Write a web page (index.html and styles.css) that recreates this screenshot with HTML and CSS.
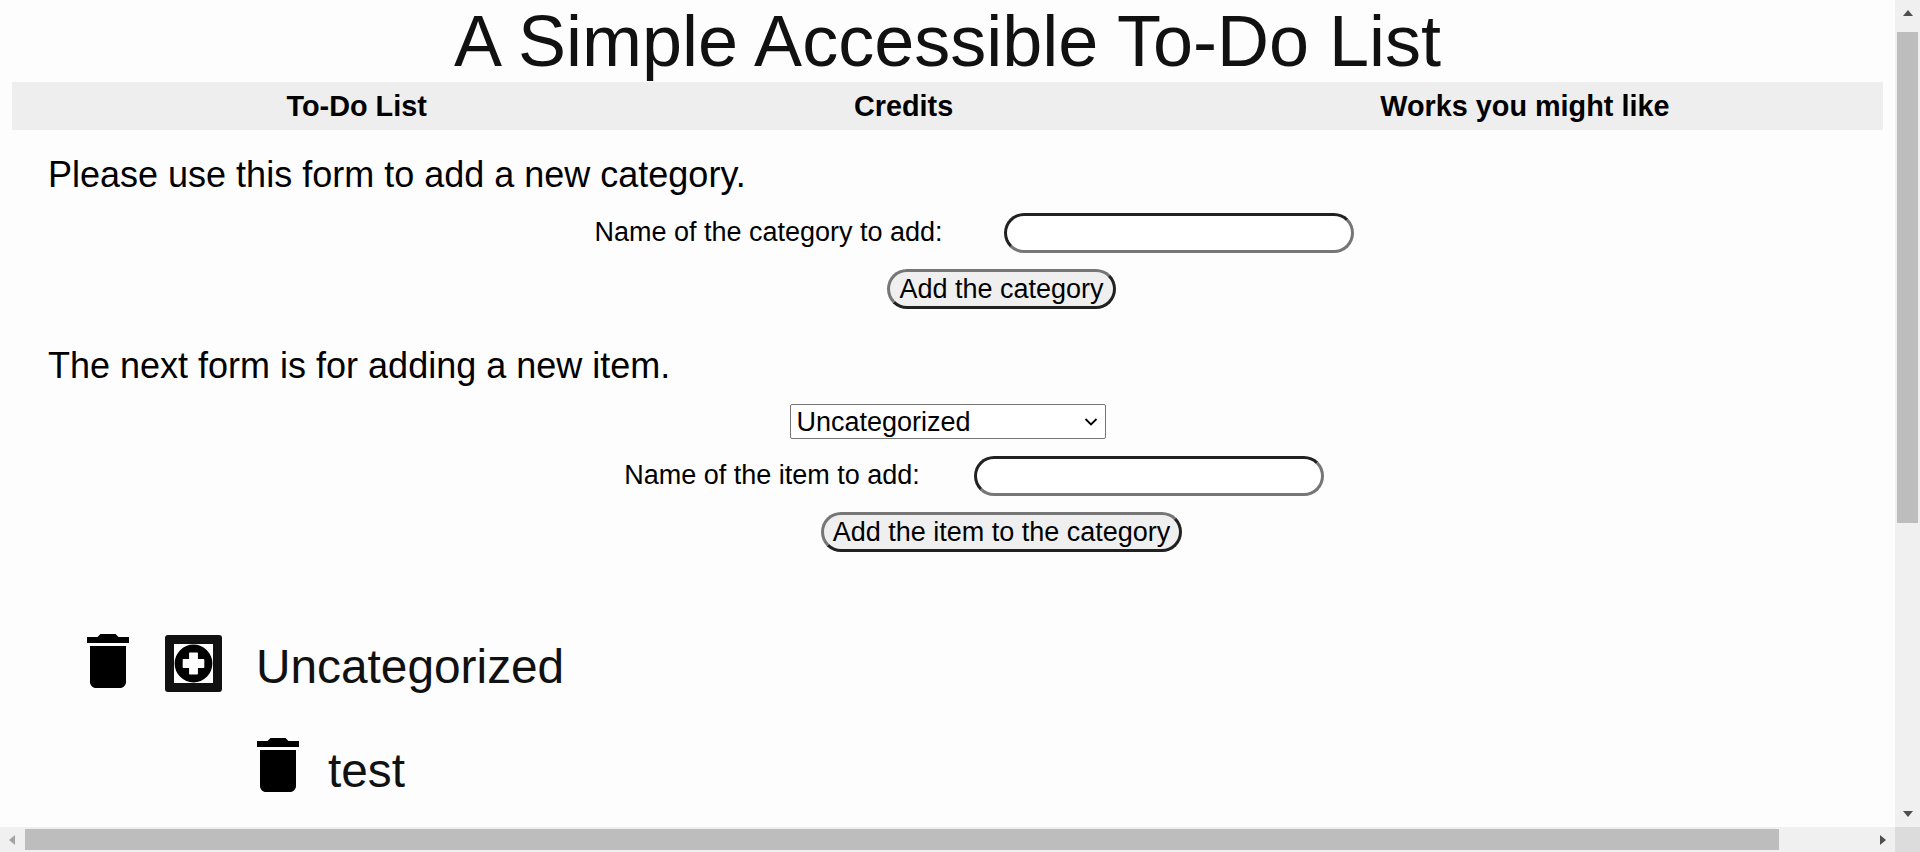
FILE: index.html
```html
<!DOCTYPE html>
<html lang="en">
<head>
  <meta charset="UTF-8">
  <title>A Simple Accessible To-Do List</title>
  <link rel="stylesheet" href="styles.css">
</head>
<body>
<div class="window">
  <main class="page">
    <h1>A Simple Accessible To-Do List</h1>
    <nav class="tabs">
      <a href="#list">To-Do List</a>
      <a href="#credits">Credits</a>
      <a href="#works">Works you might like</a>
    </nav>

    <p class="intro first">Please use this form to add a new category.</p>
    <form class="add-form">
      <div class="field">
        <label for="category">Name of the category to add:</label>
        <input type="text" id="category">
      </div>
      <button type="button" class="pill">Add the category</button>
    </form>

    <p class="intro">The next form is for adding a new item.</p>
    <form class="add-form second">
      <select id="categoryPick">
        <option>Uncategorized</option>
      </select>
      <div class="field">
        <label for="item">Name of the item to add:</label>
        <input type="text" id="item">
      </div>
      <button type="button" class="pill">Add the item to the category</button>
    </form>

    <section class="todo">
      <div class="category">
        <svg class="trash" viewBox="0 0 24 24"><path d="M6 19c0 1.1.9 2 2 2h8c1.1 0 2-.9 2-2V7H6v12zM19 4h-3.5l-1-1h-5l-1 1H5v2h14V4z"/></svg>
        <button type="button" class="add-item" aria-label="Add item">
          <svg viewBox="0 0 512 512"><path fill-rule="evenodd" d="M256 8a248 248 0 1 0 0 496a248 248 0 1 0 0-496z M208 112h96q10 0 10 10v74h74q10 0 10 10v100q0 10-10 10h-74v74q0 10-10 10h-96q-10 0-10-10v-74h-74q-10 0-10-10v-100q0-10 10-10h74v-74q0-10 10-10z"/></svg>
        </button>
        <span class="name">Uncategorized</span>
      </div>
      <div class="item">
        <svg class="trash" viewBox="0 0 24 24"><path d="M6 19c0 1.1.9 2 2 2h8c1.1 0 2-.9 2-2V7H6v12zM19 4h-3.5l-1-1h-5l-1 1H5v2h14V4z"/></svg>
        <span class="name">test</span>
      </div>
    </section>
  </main>

  <div class="vbar">
    <span class="arrow up"></span>
    <div class="vtrack"><div class="vthumb"></div></div>
    <span class="arrow down"></span>
  </div>
  <div class="hbar">
    <span class="arrow left"></span>
    <div class="htrack"><div class="hthumb"></div></div>
    <span class="arrow right"></span>
  </div>
  <div class="corner"></div>
</div>
</body>
</html>
```

FILE: styles.css
```css
html, body {
  margin: 0;
  padding: 0;
  height: 100%;
  overflow: hidden;
}
body {
  font-family: "Liberation Sans", Arial, sans-serif;
  font-size: 27px;
  color: #000;
  background-color: #fdfdfd;
}
.window {
  display: grid;
  grid-template-columns: 1fr 25px;
  grid-template-rows: 1fr 25px;
  height: 100%;
}
.page {
  padding: 0 12px;
  overflow: hidden;
  min-width: 0;
}
h1 {
  margin: 0;
  font-size: 72px;
  font-weight: normal;
  line-height: 82px;
  text-align: center;
  color: #111;
}
.tabs {
  display: flex;
  justify-content: space-around;
  align-items: center;
  height: 48px;
  padding-left: 61px;
  background-color: #eee;
}
.tabs a {
  font-size: 28.8px;
  font-weight: bold;
  color: #000;
  text-decoration: none;
}
.intro {
  margin: 0 0 0 36px;
  font-size: 36px;
  line-height: 39px;
  padding-top: 37px;
}
.intro.first {
  padding-top: 25px;
  padding-bottom: 1px;
}
.add-form {
  display: flex;
  flex-direction: column;
  align-items: center;
  padding-top: 18px;
  gap: 16px;
}
.add-form.second {
  padding-top: 19px;
}
.field {
  display: flex;
  align-items: center;
  margin-left: 53px;
}
.field label {
  margin-right: 61px;
  padding-bottom: 1px;
}
.second .field {
  margin-top: 1px;
}
.second .field label {
  margin-right: 54px;
}
input {
  width: 350px;
  height: 40px;
  box-sizing: border-box;
  border: 3px inset #767676;
  border-radius: 20px;
  background-color: #fff;
}
select {
  appearance: none;
  width: 316px;
  height: 35px;
  box-sizing: border-box;
  padding: 0 6px;
  font-family: inherit;
  font-size: 27px;
  color: #000;
  border: 1px solid #767676;
  border-radius: 2px;
  background: #fff url("data:image/svg+xml,%3Csvg xmlns='http://www.w3.org/2000/svg' width='14' height='8' viewBox='0 0 14 8'%3E%3Cpath d='M1.5 1l5.5 5.5L12.5 1' fill='none' stroke='%23000' stroke-width='1.8'/%3E%3C/svg%3E") no-repeat right 7px center;
}
.pill {
  height: 40px;
  margin-left: 108px;
  padding: 0 9px;
  box-sizing: border-box;
  font-family: inherit;
  font-size: 27px;
  color: #000;
  background-color: #efefef;
  border: 3px outset #767676;
  border-radius: 20px;
}
.todo {
  padding-top: 73px;
}
.category, .item {
  display: flex;
  align-items: center;
  height: 72px;
}
.category {
  margin-left: 60px;
}
.item {
  margin-top: 32px;
  margin-left: 230px;
}
.trash {
  width: 72px;
  height: 72px;
  flex: none;
}
.add-item {
  width: 57px;
  height: 57px;
  box-sizing: border-box;
  margin: 5px 34px 0 21px;
  padding: 0;
  border: 9px solid #111;
  border-radius: 3px;
  background-color: #fff;
}
.add-item svg {
  display: block;
  width: 39px;
  height: 39px;
}
.name {
  font-size: 47.8px;
  color: #111;
}
.category .name {
  margin-top: 11px;
}
.item .name {
  margin-top: 10px;
  margin-left: 14px;
}

/* scrollbars */
.vbar, .hbar {
  display: flex;
  align-items: center;
  background-color: #f0f0f0;
}
.vbar {
  flex-direction: column;
}
.vtrack, .htrack {
  flex: 1;
  display: flex;
}
.vtrack {
  width: 21px;
  padding-top: 7px;
}
.htrack {
  height: 21px;
}
.vthumb {
  width: 21px;
  height: 491px;
  background-color: #bdbdbd;
}
.hthumb {
  width: 1754px;
  height: 21px;
  background-color: #bdbdbd;
}
.corner {
  background-color: #dcdcdc;
}
.arrow {
  flex: none;
  width: 0;
  height: 0;
  border-style: solid;
  border-color: transparent;
}
.arrow.up {
  margin: 10px 0 9px;
  border-width: 0 5.5px 6px;
  border-bottom-color: #505050;
}
.arrow.down {
  margin: 9px 0 10px;
  border-width: 6px 5.5px 0;
  border-top-color: #505050;
}
.arrow.left {
  margin: 0 10px 0 9px;
  border-width: 5.5px 6px 5.5px 0;
  border-right-color: #a3a3a3;
}
.arrow.right {
  margin: 0 9px 0 10px;
  border-width: 5.5px 0 5.5px 6px;
  border-left-color: #505050;
}
```
